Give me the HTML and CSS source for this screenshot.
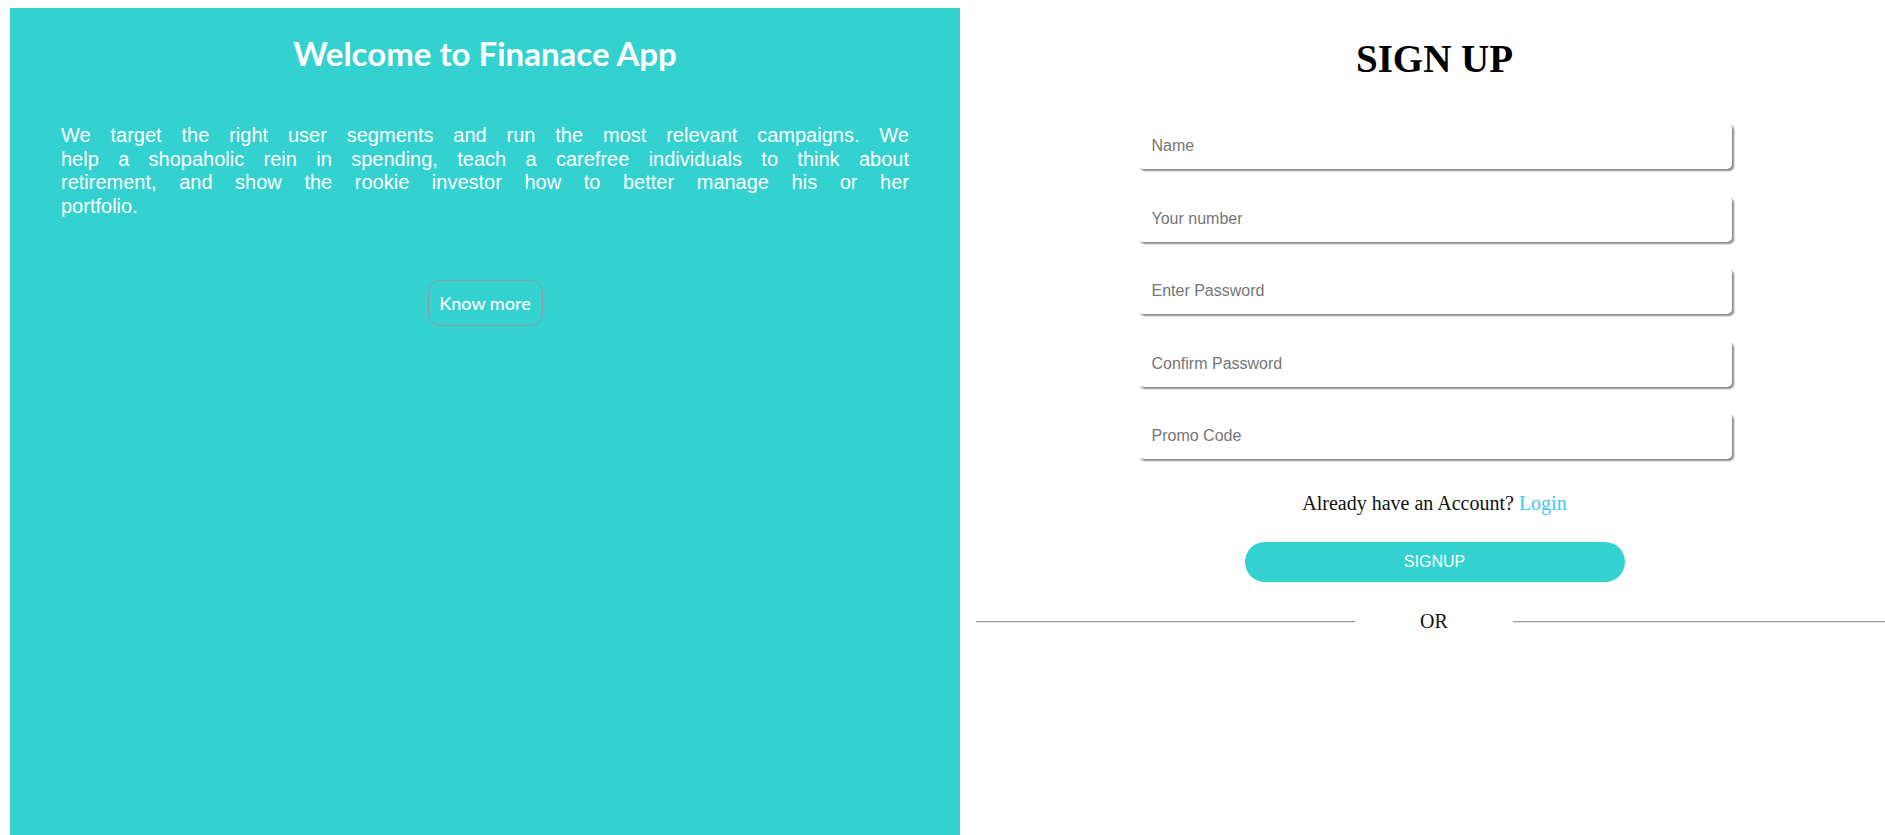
FILE: index.html
```html
<!DOCTYPE html>
<html lang="en">
<head>
<meta charset="utf-8">
<title>Finanace App - Sign Up</title>
<link rel="stylesheet" href="styles.css">
</head>
<body>
  <section class="intro-panel">
    <h1 class="intro-title">Welcome to Finanace App</h1>
    <p class="intro-text">We target the right user segments and run the most relevant campaigns. We help a shopaholic rein in spending, teach a carefree individuals to think about retirement, and show the rookie investor how to better manage his or her portfolio.</p>
    <button class="know-more" type="button">Know more</button>
  </section>
  <section class="signup-panel">
    <h2 class="signup-title">SIGN UP</h2>
    <form class="signup-form">
      <input class="field" type="text" placeholder="Name">
      <input class="field" type="text" placeholder="Your number">
      <input class="field" type="password" placeholder="Enter Password">
      <input class="field" type="password" placeholder="Confirm Password">
      <input class="field" type="text" placeholder="Promo Code">
    </form>
    <p class="account-text">Already have an Account? <a class="login-link" href="#">Login</a></p>
    <button class="signup-btn" type="button">SIGNUP</button>
    <div class="or-row">
      <hr class="or-line or-line-left">
      <span class="or-text">OR</span>
      <hr class="or-line or-line-right">
    </div>
  </section>
</body>
</html>
```
FILE: styles.css
```css
html {
  overflow: hidden;
}

body {
  margin: 8px 0 0 10px;
  display: flex;
  align-items: flex-start;
  background: #ffffff;
  font-family: "Liberation Serif", "Times New Roman", serif;
}

.intro-panel {
  flex: none;
  width: 950px;
  height: 827px;
  box-sizing: border-box;
  padding: 0 51px;
  background: #33d1d0;
  color: #ffffff;
  text-align: center;
}

.intro-title {
  margin: 26px 0 0;
  font-family: Lato, "Open Sans", sans-serif;
  font-weight: 700;
  font-size: 33px;
  line-height: 38px;
}

.intro-text {
  margin: 52px 0 0;
  font-family: "Liberation Sans", Arial, sans-serif;
  font-size: 20px;
  line-height: 23.5px;
  word-spacing: 12px;
  text-align: justify;
  text-align-last: left;
}

.know-more {
  margin-top: 62px;
  width: 115px;
  height: 46px;
  padding: 0;
  border: 1px solid #8f9a9a;
  border-radius: 12px;
  background: transparent;
  color: #ffffff;
  font-family: Lato, "Open Sans", sans-serif;
  font-size: 18px;
  font-weight: 500;
}

.signup-panel {
  flex: 1;
  min-width: 0;
  margin-left: 16px;
  padding-left: 8px;
  display: flex;
  flex-direction: column;
  align-items: center;
}

.signup-title {
  margin: 28px 0 0;
  font-family: "Liberation Serif", "Times New Roman", serif;
  font-weight: 700;
  font-size: 39px;
  line-height: 45px;
}

.signup-form {
  margin-top: 42px;
  display: flex;
  flex-direction: column;
  gap: 26.5px;
}

.field {
  box-sizing: border-box;
  width: 594px;
  height: 46px;
  padding: 0 14px;
  border: none;
  border-radius: 5px;
  box-shadow: 2px 2px 2px #888888;
  background: #ffffff;
  font-family: "Liberation Sans", Arial, sans-serif;
  font-size: 16px;
  color: #333333;
  outline: none;
}

.field::placeholder {
  color: #757575;
}

.account-text {
  margin: 32.5px 0 0;
  font-size: 20px;
  line-height: 23px;
  color: #111111;
}

.login-link {
  color: #3cc8f2;
  text-decoration: none;
}

.signup-btn {
  margin-top: 27.5px;
  width: 380px;
  height: 40px;
  border: none;
  border-radius: 20px;
  background: #33d1d0;
  color: #ffffff;
  font-family: "Liberation Sans", Arial, sans-serif;
  font-size: 16px;
}

.or-row {
  align-self: stretch;
  margin: 28px 0 0 -8px;
  display: flex;
  align-items: center;
  height: 23px;
}

.or-line {
  margin: 0;
  height: 0;
  border: none;
  border-top: 1px solid #9a9a9a;
  border-bottom: 1px solid #e6e6e6;
}

.or-line-left {
  flex: none;
  width: 379px;
}

.or-line-right {
  flex: 1;
}

.or-text {
  flex: none;
  width: 158px;
  text-align: center;
  font-size: 20px;
  line-height: 23px;
  color: #111111;
}
```
